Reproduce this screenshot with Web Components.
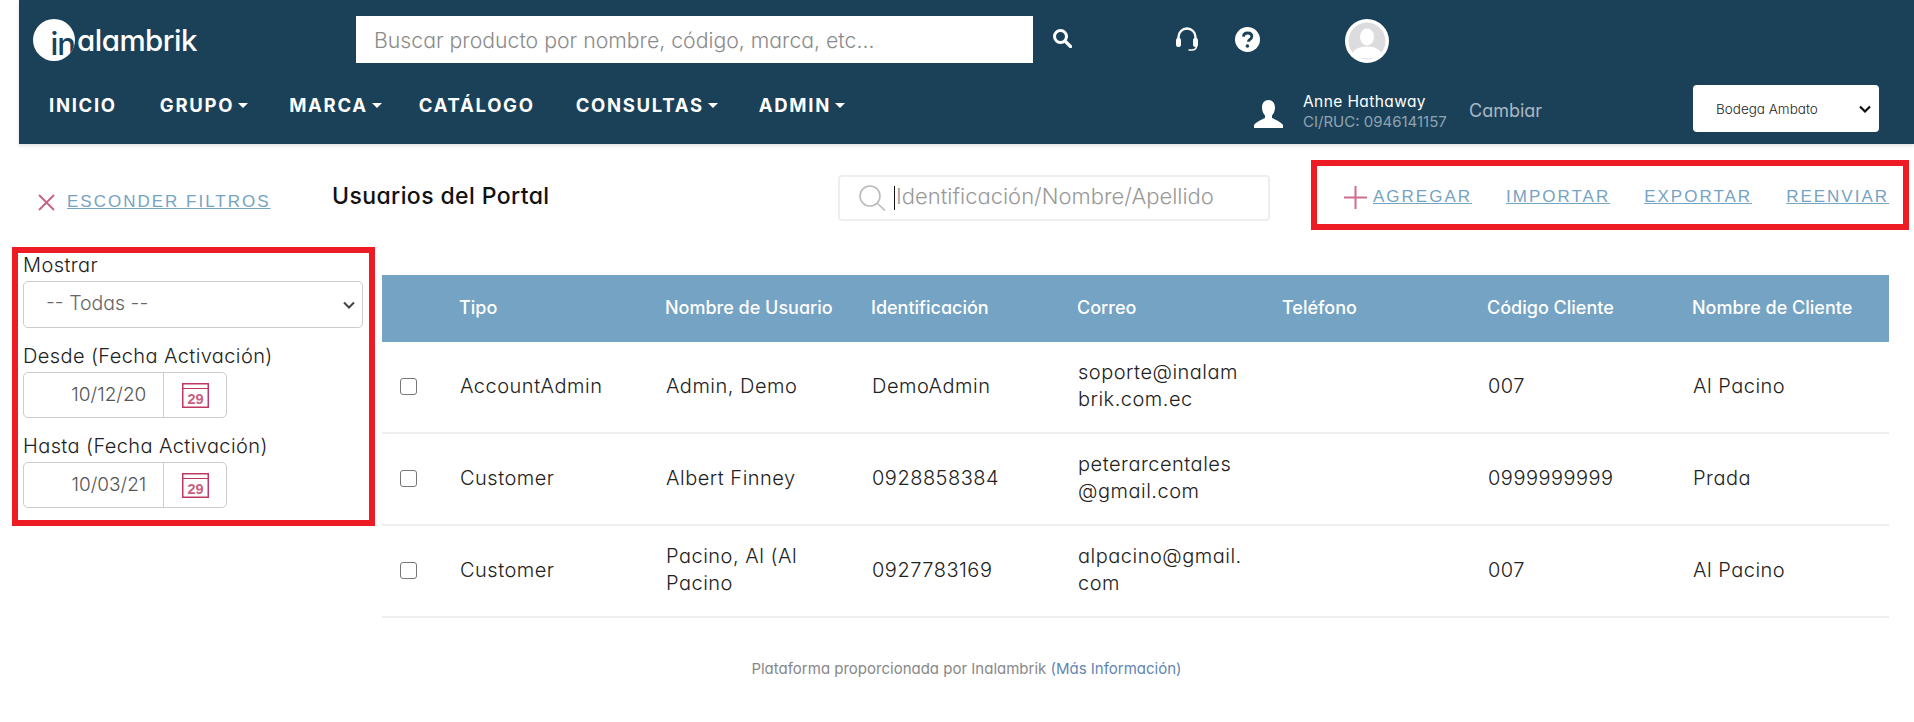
<!DOCTYPE html>
<html lang="es">
<head>
<meta charset="utf-8">
<title>Usuarios del Portal</title>
<style>
    html, body { margin: 0; padding: 0; background: #fff; }
    body {
        font-family: Inter, "Noto Sans", sans-serif;
        font-feature-settings: "cv11" 1;
        font-weight: 300;
        color: #222;
        height: 722px;
        overflow: hidden;
    }
    user-row > span { display: block; }
</style>
</head>
<body>
<app-header>
    <nav-item slot="nav" style="margin-right:43px">Inicio</nav-item>
    <nav-item slot="nav" caret>Grupo</nav-item>
    <nav-item slot="nav" caret style="margin-right:37px">Marca</nav-item>
    <nav-item slot="nav">Catálogo</nav-item>
    <nav-item slot="nav" caret>Consultas</nav-item>
    <nav-item slot="nav" caret>Admin</nav-item>
</app-header>
<page-toolbar></page-toolbar>
<page-body>
    <filter-panel slot="filters">
        <filter-select label="Mostrar" value="-- Todas --"></filter-select>
        <date-field label="Desde (Fecha Activación)" value="10/12/20"></date-field>
        <date-field label="Hasta (Fecha Activación)" value="10/03/21" style="margin-top:16px"></date-field>
    </filter-panel>
    <users-table>
        <user-row>
            <span>AccountAdmin</span><span>Admin, Demo</span><span>DemoAdmin</span><span>soporte@inalam<br>brik.com.ec</span><span></span><span>007</span><span>Al Pacino</span>
        </user-row>
        <user-row>
            <span>Customer</span><span>Albert Finney</span><span>0928858384</span><span>peterarcentales<br>@gmail.com</span><span></span><span>0999999999</span><span>Prada</span>
        </user-row>
        <user-row>
            <span>Customer</span><span>Pacino, Al (Al<br>Pacino</span><span>0927783169</span><span>alpacino@gmail.<br>com</span><span></span><span>007</span><span>Al Pacino</span>
        </user-row>
    </users-table>
</page-body>
<page-footer></page-footer>

<script>
const define = (name, css, html) => {
    class El extends HTMLElement {
        constructor() {
            super();
            this.attachShadow({ mode: 'open' });
        }
        connectedCallback() {
            const render = typeof html === 'function' ? html(this) : html;
            this.shadowRoot.innerHTML = `<style>${css}</style>${render}`;
        }
    }
    customElements.define(name, El);
};

define('nav-item', `
    :host { display: flex; align-items: center; height: 30px; color: #fff; font-size: 18.5px; font-weight: 700;
        letter-spacing: 1.7px; text-transform: uppercase; margin-right: 41px; white-space: nowrap; }
    i { width: 0; height: 0; margin-left: 4px; border: 5px solid transparent; border-top-color: #fff; border-bottom: 0; }
`, el => `<slot></slot>${el.hasAttribute('caret') ? '<i></i>' : ''}`);

define('app-header', `
    :host { display: block; margin-left: 19px; height: 144px; background: #1b4159; box-shadow: 0 2px 4px rgba(0,0,0,.12); position: relative; }
    .top { display: flex; height: 80px; box-sizing: border-box; padding-top: 16px; }
    .logo { width: 337px; display: flex; align-items: center; height: 47px; padding-left: 14px; box-sizing: border-box; }
    .mark { width: 42px; height: 42px; border-radius: 50%; background: #fff; color: #1b4159; font-size: 31px; font-weight: 500;
        display: flex; justify-content: flex-end; align-items: flex-end; line-height: 35px; letter-spacing: -1px; overflow: hidden; flex: none; }
    .word { color: #fff; font-size: 29.5px; font-weight: 500; margin-left: 2px; letter-spacing: -.5px; }
    .search { width: 677px; height: 47px; background: #fff; font-size: 21.25px; color: #8b8b8b; display: flex; align-items: center;
        padding-left: 18px; box-sizing: border-box; }
    svg { display: block; flex: none; }
    .s-icon { margin: 12px 0 0 19px; }
    .h-icon { margin: 11px 0 0 104px; }
    .q-icon { margin: 11px 0 0 37px; }
    .a-icon { margin: 3px 0 0 85px; }
    .bottom { display: flex; height: 64px; }
    nav { display: flex; padding: 10px 0 0 30px; }
    .user { margin-left: auto; display: flex; }
    .p-icon { margin: 20px 20px 0 0; }
    .who { padding-top: 12px; font-size: 15px; line-height: 20px; color: #fff; font-weight: 400; width: 166px; white-space: nowrap; }
    .who .name { font-size: 15.5px; letter-spacing: .4px; }
    .who .ruc { color: #8fa3b0; }
    .change { padding-top: 19px; width: 224px; font-size: 18px; line-height: 24px; color: #a9b8c2; font-weight: 400; }
    .store { margin: 5px 35px 0 0; width: 186px; height: 47px; background: #fff; border-radius: 4px; font-size: 13.5px; font-weight: 300; color: #222;
        display: flex; align-items: center; justify-content: space-between; padding: 0 8px 0 23px; box-sizing: border-box; }
`, `
    <div class="top">
        <div class="logo"><span class="mark">in</span><span class="word">alambrik</span></div>
        <div class="search">Buscar producto por nombre, código, marca, etc...</div>
        <svg class="s-icon" width="20" height="20" viewBox="0 0 20 20" fill="none" stroke="#fff"><circle cx="8.5" cy="8.5" r="6" stroke-width="3"/><path d="M13 13l5.5 5.5" stroke-width="3.2" stroke-linecap="round"/></svg>
        <svg class="h-icon" width="22" height="25" viewBox="0 0 22 25" fill="none"><path d="M2.5 13V10a8.5 8.5 0 0 1 17 0v3" stroke="#fff" stroke-width="2.4"/><rect x="0" y="11" width="5" height="9" rx="2.2" fill="#fff"/><rect x="17" y="11" width="5" height="9" rx="2.2" fill="#fff"/><path d="M20.5 19c0 3-2 4-5 4h-3" stroke="#fff" stroke-width="1.6"/></svg>
        <svg class="q-icon" width="25" height="25" viewBox="0 0 25 25"><circle cx="12.5" cy="12.5" r="12.5" fill="#fff"/><path d="M8.4 9.6c.2-2.4 1.9-3.6 4.2-3.6 2.5 0 4.2 1.4 4.2 3.4 0 1.6-.9 2.4-2.1 3.2-1 .7-1.3 1.1-1.3 2.2" fill="none" stroke="#1b4159" stroke-width="2.8"/><circle cx="12.4" cy="19" r="1.8" fill="#1b4159"/></svg>
        <svg class="a-icon" width="44" height="44" viewBox="0 0 44 44"><circle cx="22" cy="22" r="22" fill="#fff"/><circle cx="22" cy="22" r="18.5" fill="#dcdcde"/><ellipse cx="22" cy="18" rx="7" ry="8.5" fill="#fff"/><path d="M7 35c3-6 9-7.5 15-7.5S34 29 37 35c-8 6-22 6-30 0z" fill="#fff"/></svg>
    </div>
    <div class="bottom">
        <nav><slot name="nav"></slot></nav>
        <div class="user">
            <svg class="p-icon" width="29" height="28" viewBox="0 0 29 28" fill="#fff"><path d="M14.5 0c4 0 6.5 3 6.5 7.5 0 3.5-1.5 6.5-3 8v2.5c3 1.5 8.5 3.5 11 7v3H0v-3c2.5-3.5 8-5.5 11-7v-2.5c-1.5-1.5-3-4.5-3-8C8 3 10.5 0 14.5 0z"/></svg>
            <div class="who"><div class="name">Anne Hathaway</div><div class="ruc">CI/RUC: 0946141157</div></div>
            <div class="change">Cambiar</div>
            <div class="store">Bodega Ambato
                <svg width="12" height="8" viewBox="0 0 12 8" fill="none" stroke="#111" stroke-width="2.2"><path d="M1 1.5l5 5 5-5"/></svg>
            </div>
        </div>
    </div>
`);

define('action-link', `
    :host { display: inline-block; font-family: "Liberation Sans", Arial, sans-serif; font-weight: 400; font-size: 17px; letter-spacing: 2px;
        color: #75a3c3; text-decoration: underline; text-transform: uppercase; white-space: nowrap; }
`, `<slot></slot>`);

define('page-toolbar', `
    :host { display: flex; height: 103px; position: relative; }
    svg { display: block; flex: none; }
    .hide { display: flex; align-items: center; margin: 49px 0 0 38px; width: 294px; height: 18px; flex: none; }
    .hide svg { margin-right: 12px; }
    .title { margin-top: 38px; width: 506px; flex: none; height: 28px; line-height: 28px; font-size: 23px; font-weight: 500; letter-spacing: .4px; color: #111; white-space: nowrap; }
    .find { margin-top: 31px; width: 432px; flex: none; height: 46px; box-sizing: border-box; border: 2px solid #eee; border-radius: 4px; display: flex; align-items: center;
        padding-left: 19px; font-size: 22px; color: #999; white-space: nowrap; }
    .find svg { margin-right: 8px; }
    .find b { width: 1px; height: 24px; background: #111; margin-right: 1px; }
    .find span { margin-bottom: 4px; }
    .acts { margin: 16px 0 0 41px; width: 598px; flex: none; height: 70px; box-sizing: border-box; border: 6px solid #ed1c24; display: flex; align-items: center; padding: 4px 0 0 27px; }
    .acts svg { margin-right: 6px; }
    .acts action-link { margin-right: 34px; }
    .acts action-link:last-child { margin-right: 0; }
`, `
    <div class="hide">
        <svg width="17" height="17" viewBox="0 0 17 17" stroke="#c9607f" stroke-width="1.8" fill="none"><path d="M1 1l15 15M16 1L1 16"/></svg>
        <action-link>Esconder filtros</action-link>
    </div>
    <div class="title">Usuarios del Portal</div>
    <div class="find">
        <svg width="27" height="26" viewBox="0 0 27 26" fill="none" stroke="#bbb" stroke-width="1.6"><circle cx="11" cy="11" r="10"/><path d="M18 18l8 7.5"/></svg>
        <b></b><span>Identificación/Nombre/Apellido</span>
    </div>
    <div class="acts">
        <svg width="23" height="23" viewBox="0 0 23 23" stroke="#cf6d8d" stroke-width="2" fill="none"><path d="M11.5 0v23M0 11.5h23"/></svg>
        <action-link>Agregar</action-link><action-link>Importar</action-link><action-link>Exportar</action-link><action-link>Reenviar</action-link>
    </div>
`);

define('page-body', `
    :host { display: flex; align-items: flex-start; }
`, `<slot name="filters"></slot><slot></slot>`);

define('filter-panel', `
    :host { display: block; box-sizing: border-box; width: 363px; height: 279px; margin-left: 12px; border: 6px solid #ed1c24; padding: 0 6px 0 5px; flex: none; }
`, `<slot></slot>`);

define('filter-select', `
    :host { display: block; margin-bottom: 16px; }
    label { display: block; font-size: 20px; letter-spacing: .4px; line-height: 24px; padding-bottom: 2px; color: #222; }
    .box { margin-top: 2px; height: 47px; box-sizing: border-box; border: 1px solid #ccc; border-radius: 5px; display: flex; align-items: center;
        justify-content: space-between; padding: 0 7px 0 22px; font-size: 19.5px; color: #666; }
    .box span { margin-bottom: 3px; }
`, el => `
    <label>${el.getAttribute('label')}</label>
    <div class="box"><span>${el.getAttribute('value')}</span>
        <svg width="12" height="8" viewBox="0 0 12 8" fill="none" stroke="#444" stroke-width="2"><path d="M1 1.5l5 5 5-5"/></svg>
    </div>
`);

define('date-field', `
    :host { display: block; }
    label { display: block; font-size: 20px; letter-spacing: .4px; line-height: 24px; padding-bottom: 2px; color: #222; white-space: nowrap; }
    .box { margin-top: 2px; width: 204px; height: 46px; box-sizing: border-box; border: 1px solid #ccc; border-radius: 5px; display: flex; align-items: center; }
    .val { width: 123px; box-sizing: border-box; text-align: right; font-size: 19px; color: #555; margin-bottom: 2px; }
    .cal { margin-left: 17px; width: 62px; align-self: stretch; border-left: 1px solid #ccc; display: flex; align-items: center; justify-content: center; }
`, el => `
    <label>${el.getAttribute('label')}</label>
    <div class="box">
        <span class="val">${el.getAttribute('value')}</span>
        <span class="cal">
            <svg width="27" height="25" viewBox="0 0 27 25" fill="none"><rect x=".75" y=".75" width="25.5" height="23.5" stroke="#c0385f" stroke-width="1.5"/><path d="M1 5.5h25" stroke="#c0385f" stroke-width="1"/><text x="13.5" y="21" text-anchor="middle" font-family="Liberation Sans, sans-serif" font-size="14.5" font-weight="700" fill="#c9607f">29</text></svg>
        </span>
    </div>
`);

define('users-table', `
    :host { display: block; margin: 28px 0 0 7px; width: 1507px; flex: none;
        --cols: 77px 206px 206px 206px 205px 205px 205px 197px; }
    .head { display: grid; grid-template-columns: var(--cols); height: 67px; box-sizing: border-box; padding-bottom: 2px; align-items: center; background: #75a3c3; color: #fff;
        font-size: 18px; font-weight: 500; white-space: nowrap; }
`, `
    <div class="head">
        <span></span><span>Tipo</span><span>Nombre de Usuario</span><span>Identificación</span><span>Correo</span><span>Teléfono</span><span>Código Cliente</span><span>Nombre de Cliente</span>
    </div>
    <slot></slot>
`);

define('user-row', `
    :host { display: grid; grid-template-columns: var(--cols); height: 92px; box-sizing: border-box; border-bottom: 2px solid #eee; padding-bottom: 2px; align-items: center;
        font-size: 20px; letter-spacing: .5px; line-height: 27px; color: #222; white-space: nowrap; }
    .check { width: 17px; height: 17px; box-sizing: border-box; border: 1px solid #767676; border-radius: 3px; margin-left: 18px; background: #fff; }
    ::slotted(*) { padding-left: 1px; }
`, `<span class="check"></span><slot></slot>`);

define('page-footer', `
    :host { display: block; margin: 41px 0 0 19px; text-align: center; font-size: 15px; line-height: 20px; color: #888; font-weight: 400; }
    a { color: #5f86b3; text-decoration: none; }
`, `Plataforma proporcionada por Inalambrik <a>(Más Información)</a>`);
</script>
</body>
</html>
